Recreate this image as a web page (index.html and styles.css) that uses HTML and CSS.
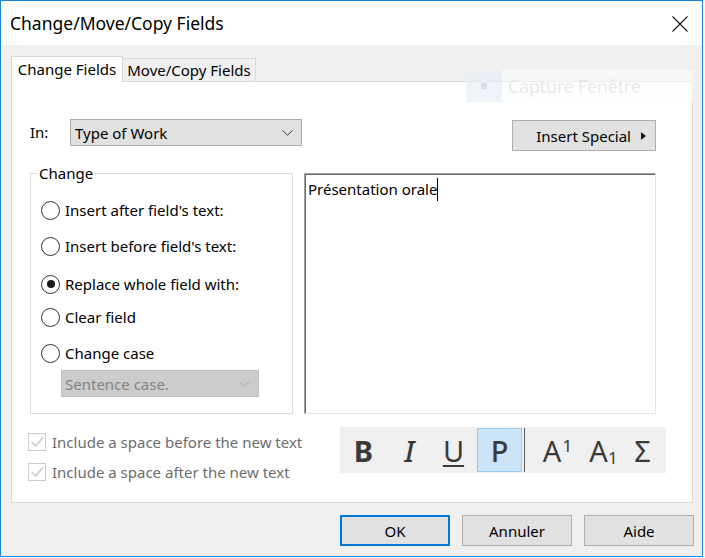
FILE: index.html
```html
<!DOCTYPE html>
<html>
<head>
<meta charset="utf-8">
<link rel="stylesheet" href="styles.css">
</head>
<body>
<div class="window">
  <div class="titlebar">
    <span class="title">Change/Move/Copy Fields</span>
    <svg class="close" viewBox="0 0 16 16" width="16" height="16"><path d="M0.5 0.5 L15.5 15.5 M15.5 0.5 L0.5 15.5" stroke="#111" stroke-width="1.1" fill="none"/></svg>
  </div>
  <div class="tabs">
    <div class="tab active">Change Fields</div>
    <div class="tab inactive">Move/Copy Fields</div>
  </div>
  <div class="panel">
    <div class="row-top">
      <span class="in-label">In:</span>
      <div class="select">
        <span>Type of Work</span>
        <svg class="chev" viewBox="0 0 11 6" width="11" height="6"><polyline points="0.5,0.5 5.5,5.2 10.5,0.5" stroke="#333" stroke-width="1" fill="none"/></svg>
      </div>
      <div class="btn special"><span>Insert Special</span><span class="tri"></span></div>
    </div>
    <div class="row-mid">
      <div class="group">
        <span class="legend">Change</span>
        <div class="radio r1"><span class="dot"></span><span>Insert after field's text:</span></div>
        <div class="radio r2"><span class="dot"></span><span>Insert before field's text:</span></div>
        <div class="radio r3"><span class="dot checked"></span><span>Replace whole field with:</span></div>
        <div class="radio r4"><span class="dot"></span><span>Clear field</span></div>
        <div class="radio r5"><span class="dot"></span><span>Change case</span></div>
        <div class="case-select">
          <span>Sentence case.</span>
          <svg class="chev" viewBox="0 0 11 6" width="11" height="6"><polyline points="0.5,0.5 5.5,5.2 10.5,0.5" stroke="#a8a8a8" stroke-width="1" fill="none"/></svg>
        </div>
      </div>
      <div class="textarea">Présentation orale<span class="caret"></span></div>
    </div>
    <div class="row-bottom">
      <div class="checks">
        <div class="check">
          <span class="box"><svg viewBox="0 0 18 18" width="18" height="18"><polyline points="3.5,9 7.5,13 15,4.5" stroke="#c4c4c4" stroke-width="1.3" fill="none"/></svg></span>
          <span>Include a space before the new text</span>
        </div>
        <div class="check second">
          <span class="box"><svg viewBox="0 0 18 18" width="18" height="18"><polyline points="3.5,9 7.5,13 15,4.5" stroke="#c4c4c4" stroke-width="1.3" fill="none"/></svg></span>
          <span>Include a space after the new text</span>
        </div>
      </div>
      <div class="toolbar">
        <span class="tool t-b">B</span>
        <span class="tool t-i">I</span>
        <span class="tool t-u">U</span>
        <span class="tool t-p">P</span>
        <span class="tool-sep"></span>
        <span class="tool t-sup">A<span class="sup">1</span></span>
        <span class="tool t-sub">A<span class="sub">1</span></span>
        <span class="tool t-sig">Σ</span>
      </div>
    </div>
  </div>
  <div class="buttons">
    <div class="btn default">OK</div>
    <div class="btn">Annuler</div>
    <div class="btn">Aide</div>
  </div>
  <div class="ghost">
    <span class="ghost-icon"><span class="ghost-sq"></span></span>
    <span class="ghost-text">Capture Fenêtre</span>
  </div>
</div>
</body>
</html>
```

FILE: styles.css
```css
* { box-sizing: border-box; }

html, body {
  margin: 0;
  padding: 0;
  background: #ffffff;
}

body {
  font-family: "Noto Sans", "Open Sans", sans-serif;
  font-size: 15px;
  color: #000;
}

.window {
  width: 703px;
  height: 557px;
  border: 1px solid #1883d7;
  background: #f0f0f0;
  display: flex;
  flex-direction: column;
  position: relative;
  overflow: hidden;
}

.titlebar {
  height: 44px;
  flex: none;
  background: #ffffff;
  display: flex;
  align-items: center;
  padding-left: 9px;
  padding-right: 14px;
}

.title {
  flex: 1;
  font-size: 17.5px;
  color: #000;
}

.close {
  display: block;
  margin-top: 1px;
}

.tabs {
  display: flex;
  align-items: flex-end;
  height: 25px;
  margin: 11px 0 0 10px;
  position: relative;
  z-index: 2;
  flex: none;
}

.tab {
  display: flex;
  align-items: center;
  justify-content: center;
  border: 1px solid #d9d9d9;
  border-bottom: none;
}

.tab.active {
  width: 112px;
  height: 26px;
  margin-bottom: -1px;
  background: #ffffff;
  padding-bottom: 1px;
}

.tab.inactive {
  width: 133px;
  height: 23px;
  border-left: none;
  background: #f0f0f0;
}

.panel {
  margin-left: 10px;
  width: 682px;
  height: 422px;
  flex: none;
  border: 1px solid #d9d9d9;
  background: #ffffff;
  position: relative;
}

.row-top {
  display: flex;
  align-items: flex-start;
  margin-top: 37px;
  height: 32px;
}

.in-label {
  width: 58px;
  padding-left: 18px;
  line-height: 27px;
}

.select {
  width: 232px;
  height: 27px;
  background: #e1e1e1;
  border: 1px solid #adadad;
  display: flex;
  align-items: center;
  justify-content: space-between;
  padding: 0 8px 0 4px;
}

.chev { display: block; }

.btn {
  width: 110px;
  height: 31px;
  background: #e1e1e1;
  border: 1px solid #adadad;
  display: flex;
  align-items: center;
  justify-content: center;
}

.btn.special {
  width: 144px;
  height: 31px;
  margin-left: auto;
  margin-right: 36px;
  margin-top: 1px;
  justify-content: flex-end;
  padding-right: 9px;
  gap: 10px;
}

.tri {
  width: 0;
  height: 0;
  border-left: 5px solid #111;
  border-top: 4px solid transparent;
  border-bottom: 4px solid transparent;
  margin-top: 1px;
}

.row-mid {
  display: flex;
  margin-top: 22px;
  margin-left: 18px;
}

.group {
  width: 263px;
  height: 241px;
  border: 1px solid #dcdcdc;
  position: relative;
  padding-left: 10px;
  display: flex;
  flex-direction: column;
}

.legend {
  position: absolute;
  top: -11px;
  left: 6px;
  background: #ffffff;
  padding: 0 2px;
  line-height: 20px;
}

.radio {
  display: flex;
  align-items: center;
  height: 22px;
  gap: 5px;
}

.radio.r1 { margin-top: 25px; }
.radio.r2 { margin-top: 14px; }
.radio.r3 { margin-top: 16px; }
.radio.r4 { margin-top: 11px; }
.radio.r5 { margin-top: 14px; }

.dot {
  width: 19px;
  height: 19px;
  border-radius: 50%;
  border: 1.3px solid #333333;
  background: #ffffff;
  display: flex;
  align-items: center;
  justify-content: center;
  flex: none;
}

.dot.checked::after {
  content: "";
  width: 8px;
  height: 8px;
  border-radius: 50%;
  background: #1a1a1a;
}

.case-select {
  margin-top: 6px;
  margin-left: 20px;
  width: 198px;
  height: 27px;
  background: #cccccc;
  border: 1px solid #bfbfbf;
  color: #838383;
  display: flex;
  align-items: center;
  justify-content: space-between;
  padding: 0 8px 0 3px;
}

.textarea {
  margin-left: 11px;
  width: 352px;
  height: 241px;
  border-top: 1px solid #a0a0a0;
  border-left: 1px solid #a0a0a0;
  border-right: 1px solid #e3e3e3;
  border-bottom: 1px solid #e3e3e3;
  box-shadow: inset 1px 1px 0 #696969;
  padding: 4px 3px;
  line-height: 20px;
}

.caret {
  display: inline-block;
  width: 1px;
  height: 23px;
  background: #000;
  vertical-align: -6px;
}

.row-bottom {
  display: flex;
  margin-top: 13px;
}

.checks {
  width: 328px;
  padding-left: 16px;
  padding-top: 6px;
}

.check {
  display: flex;
  align-items: center;
  gap: 6px;
  height: 18px;
  color: #6d6d6d;
}

.check.second { margin-top: 12px; }

.box {
  width: 18px;
  height: 18px;
  border: 1px solid #cccccc;
  background: #ffffff;
  position: relative;
  flex: none;
}

.box svg {
  position: absolute;
  left: -1px;
  top: -1px;
}

.toolbar {
  width: 326px;
  height: 46px;
  background: #f0f0f0;
  display: flex;
  align-items: stretch;
}

.tool {
  display: flex;
  align-items: center;
  justify-content: center;
  font-size: 29px;
  color: #3a3a3a;
  line-height: 1;
}

.t-b { width: 45px; font-weight: 700; padding-left: 2px; }
.t-i { width: 45px; font-style: italic; font-weight: 500; padding-left: 4px; }
.t-u { width: 47px; text-decoration: underline; text-decoration-thickness: 2px; text-underline-offset: 3px; font-weight: 400; }
.t-p {
  width: 45px;
  margin: 1px 0;
  background: #cce4f7;
  border: 1px solid #99c9ef;
  font-weight: 500;
}

.tool-sep {
  width: 5px;
  position: relative;
}

.tool-sep::after {
  content: "";
  position: absolute;
  left: 2px;
  top: 1px;
  bottom: 1px;
  width: 1px;
  background: #5a5a5a;
}

.t-sup { width: 57px; padding-left: 4px; }
.t-sub { width: 35px; padding-left: 4px; }
.t-sig { width: 47px; }

.sup {
  font-size: 17px;
  align-self: flex-start;
  margin-top: 10px;
  margin-left: 1px;
}

.sub {
  font-size: 17px;
  align-self: flex-end;
  margin-bottom: 7px;
  margin-left: 0;
}

.buttons {
  display: flex;
  gap: 12px;
  margin: 12px 0 0 339px;
}

.btn.default {
  border: 2px solid #0078d7;
}

.ghost {
  position: absolute;
  left: 465px;
  top: 69px;
  width: 228px;
  height: 32px;
  background: rgba(250, 253, 255, 0.55);
  display: flex;
  align-items: center;
}

.ghost-icon {
  width: 36px;
  height: 32px;
  background: rgba(205, 222, 238, 0.3);
  display: flex;
  align-items: center;
  justify-content: center;
}

.ghost-sq {
  width: 6px;
  height: 6px;
  background: rgba(190, 200, 210, 0.5);
}

.ghost-text {
  margin-left: 6px;
  font-size: 17.5px;
  color: rgba(215, 215, 215, 0.55);
}
```
